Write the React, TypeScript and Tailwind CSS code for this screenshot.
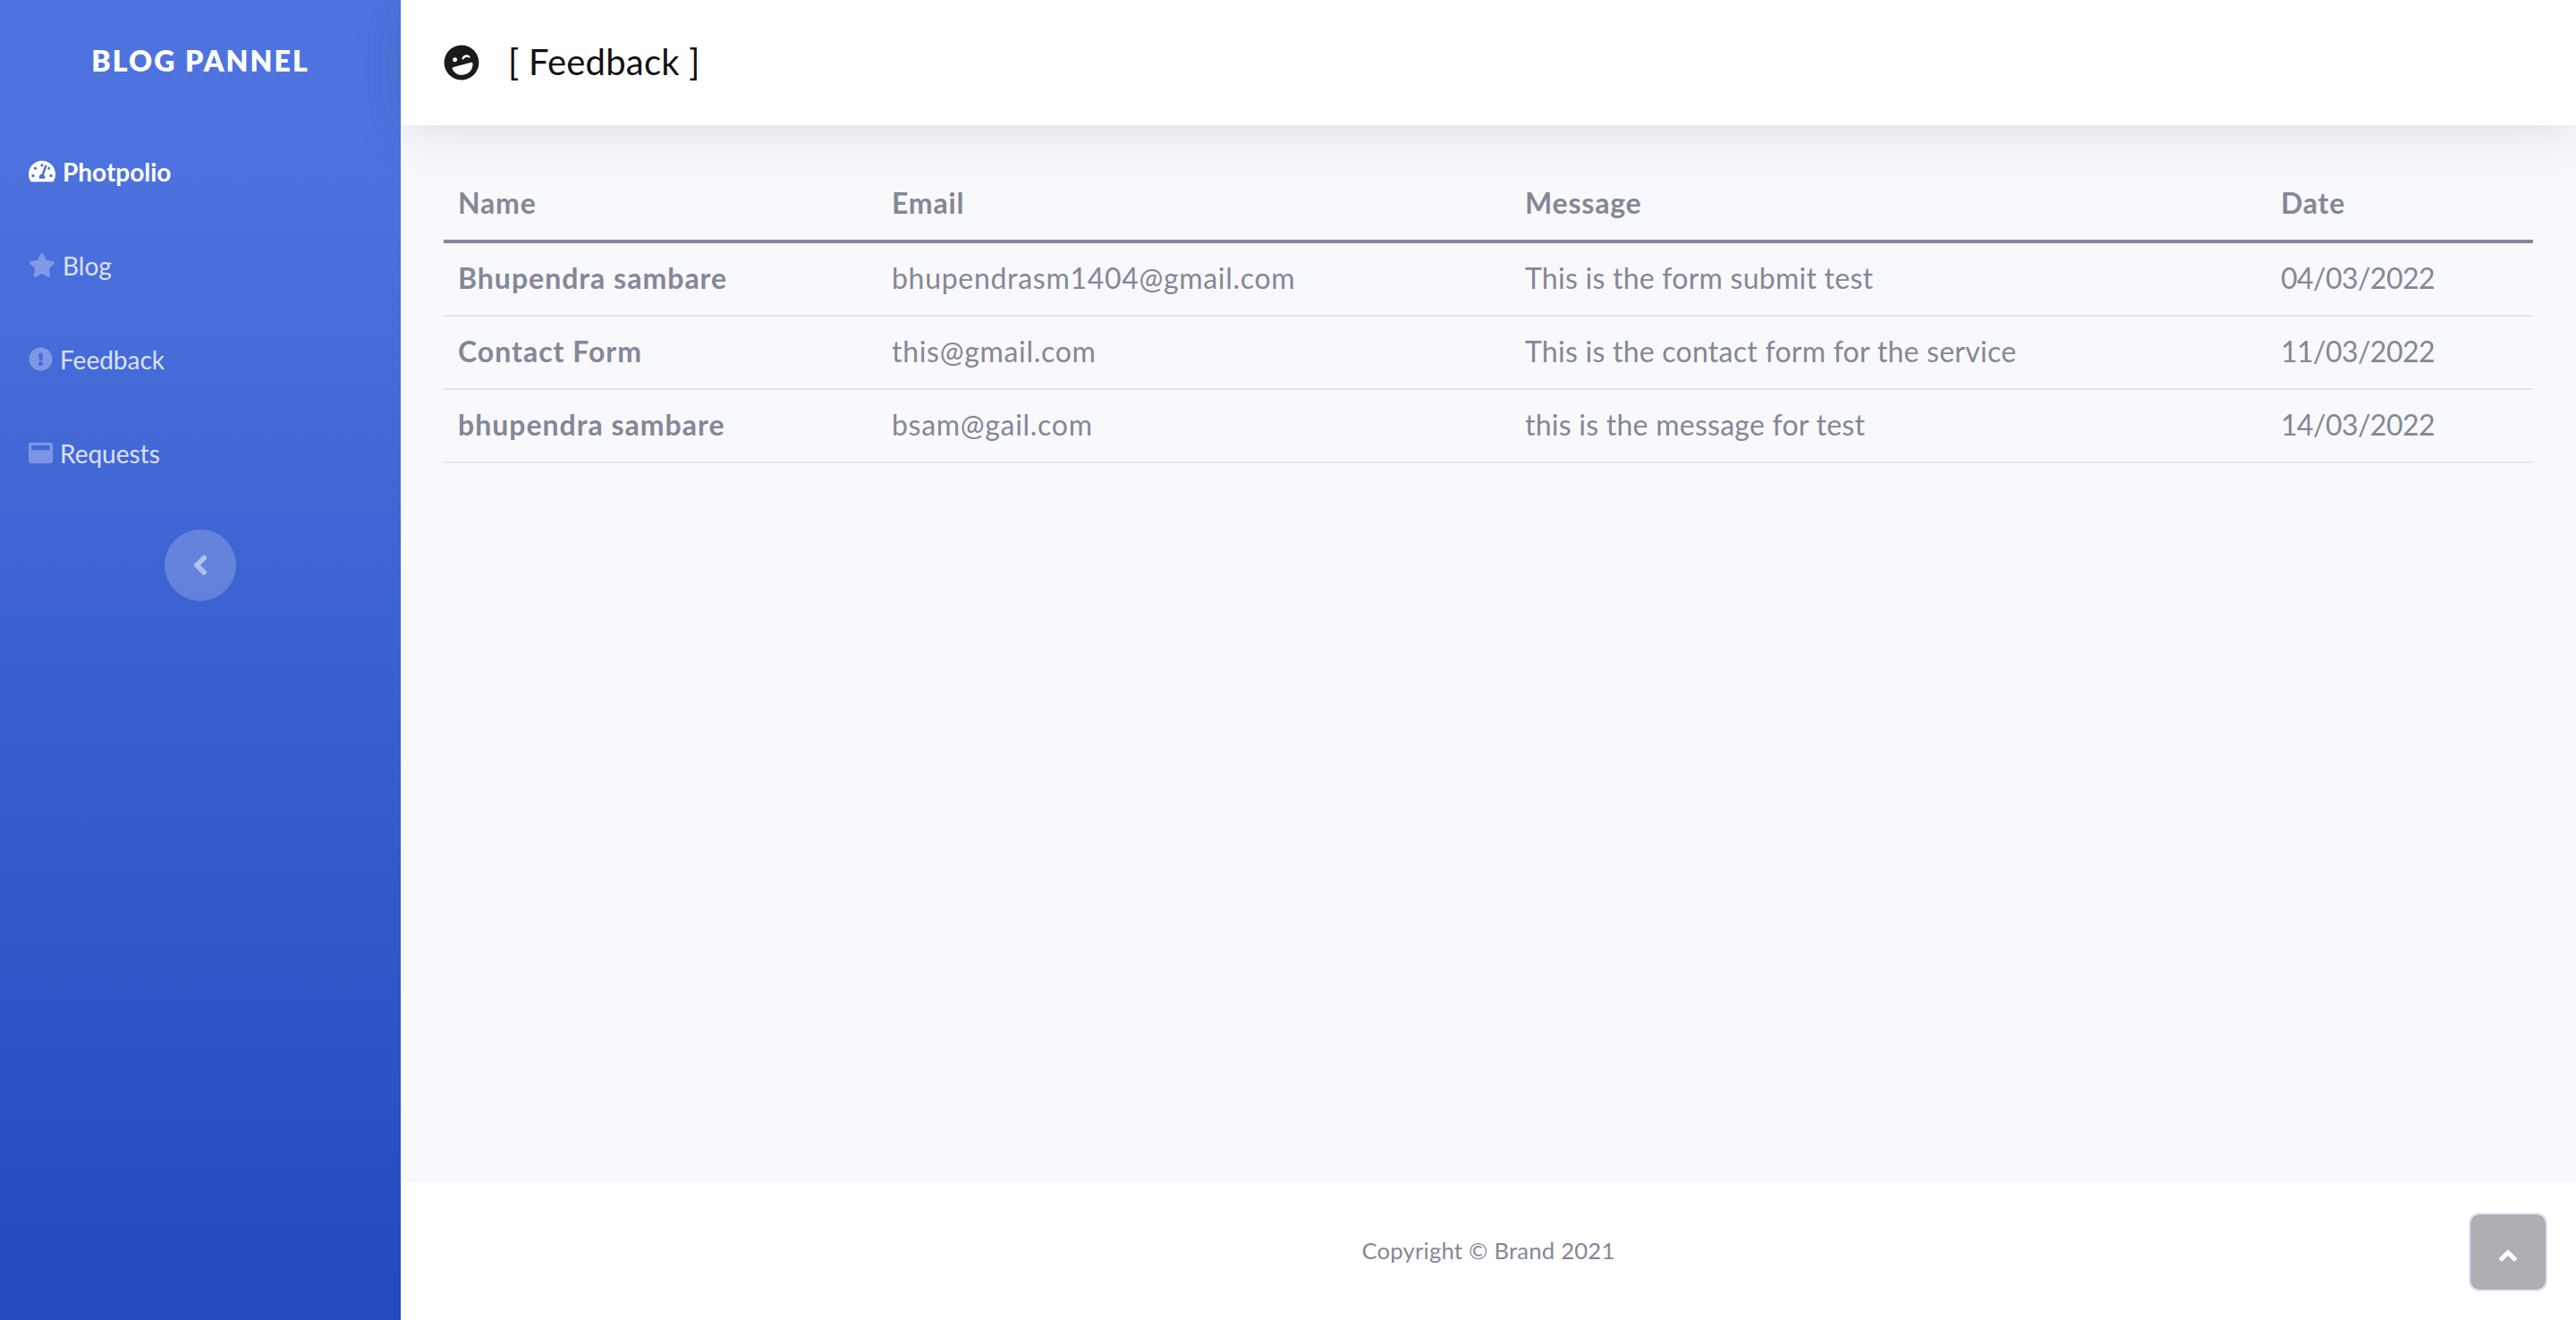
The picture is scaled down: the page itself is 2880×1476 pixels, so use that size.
import { FaLaughWink, FaTachometerAlt, FaStar, FaExclamationCircle, FaWindowMaximize, FaAngleLeft, FaAngleUp } from "react-icons/fa";

const rows = [
  ["Bhupendra sambare", "bhupendrasm1404@gmail.com", "This is the form submit test", "04/03/2022"],
  ["Contact Form", "this@gmail.com", "This is the contact form for the service", "11/03/2022"],
  ["bhupendra sambare", "bsam@gail.com", "this is the message for test", "14/03/2022"],
];

function NavItem({ icon, label, active }: { icon: React.ReactNode; label: string; active?: boolean }) {
  return (
    <a className={`flex h-[105px] items-center gap-2 pb-[2px] pl-8 text-[28px] ${active ? "font-bold text-white" : "text-white/80"}`}>
      <span className={`flex ${active ? "text-white" : "text-white/30"}`}>{icon}</span>
      <span>{label}</span>
    </a>
  );
}

export default function App() {
  return (
    <div className="relative flex h-[1476px] w-[2880px] overflow-hidden bg-[#f8f9fc] font-['Lato','Liberation_Sans',sans-serif] text-[#858796]">
      <aside className="flex w-[448px] shrink-0 flex-col bg-gradient-to-b from-[#4e73df] from-10% to-[#224abe]">
        <div className="flex h-[140px] items-center justify-center pb-1 text-[32px] font-extrabold tracking-[2.1px] text-white">BLOG PANNEL</div>
        <nav className="flex flex-col">
          <NavItem active icon={<FaTachometerAlt className="h-[27px] w-[30px]" />} label="Photpolio" />
          <NavItem icon={<FaStar className="h-[27px] w-[30px]" />} label="Blog" />
          <NavItem icon={<FaExclamationCircle className="h-[27px] w-[27px]" />} label="Feedback" />
          <NavItem icon={<FaWindowMaximize className="h-[27px] w-[27px]" />} label="Requests" />
        </nav>
        <div className="mt-[32px] flex justify-center">
          <button className="flex h-20 w-20 items-center justify-center rounded-full bg-white/20 text-[36px] text-white/50"><FaAngleLeft /></button>
        </div>
      </aside>
      <div className="flex min-w-0 flex-1 flex-col">
        <header className="z-10 flex h-[140px] shrink-0 items-center bg-white pl-12 text-[40px] tracking-[0.2px] text-[#111] shadow-[0_4px_56px_0_rgba(58,59,69,0.15)]">
          <FaLaughWink className="-rotate-[15deg] text-[40px] text-[#1a1a1a]" />
          <span className="ml-8 pb-[2px]">[ Feedback ]</span>
        </header>
        <main className="flex-1 px-12 pt-12 text-[32px]">
          <table className="w-full table-fixed border-collapse">
            <colgroup>
              <col className="w-[485px]" />
              <col className="w-[708px]" />
              <col className="w-[845px]" />
              <col />
            </colgroup>
            <thead>
              <tr className="border-b-4 border-[#858796] text-left font-bold tracking-[0.8px]">
                <th className="px-4 pb-[17px] pt-[15px] leading-[48px]">Name</th>
                <th className="px-4 pb-[17px] pt-[15px] leading-[48px]">Email</th>
                <th className="px-4 pb-[17px] pt-[15px] leading-[48px]">Message</th>
                <th className="px-4 pb-[17px] pt-[15px] leading-[48px]">Date</th>
              </tr>
            </thead>
            <tbody>
              {rows.map((r) => (
                <tr key={r[1]} className="border-b-2 border-[#e3e6f0]">
                  <td className="px-4 pb-[17px] pt-[15px] font-bold leading-[48px] tracking-[1px]">{r[0]}</td>
                  <td className="px-4 pb-[17px] pt-[15px] leading-[48px] tracking-[0.7px]">{r[1]}</td>
                  <td className="px-4 pb-[17px] pt-[15px] leading-[48px] tracking-[0.25px]">{r[2]}</td>
                  <td className="px-4 pb-[17px] pt-[15px] leading-[48px] tracking-[-0.55px]">{r[3]}</td>
                </tr>
              ))}
            </tbody>
          </table>
        </main>
        <footer className="flex h-[154px] shrink-0 items-center justify-center bg-white pb-[2px] text-[25.6px] tracking-[0.25px]">Copyright © Brand 2021</footer>
      </div>
      <a className="absolute bottom-8 right-8 flex h-[88px] w-[88px] items-center justify-center rounded-[12px] border-2 border-[#e3e6f0] bg-[#adaeb4] pt-2 text-[32px] text-white"><FaAngleUp /></a>
    </div>
  );
}
